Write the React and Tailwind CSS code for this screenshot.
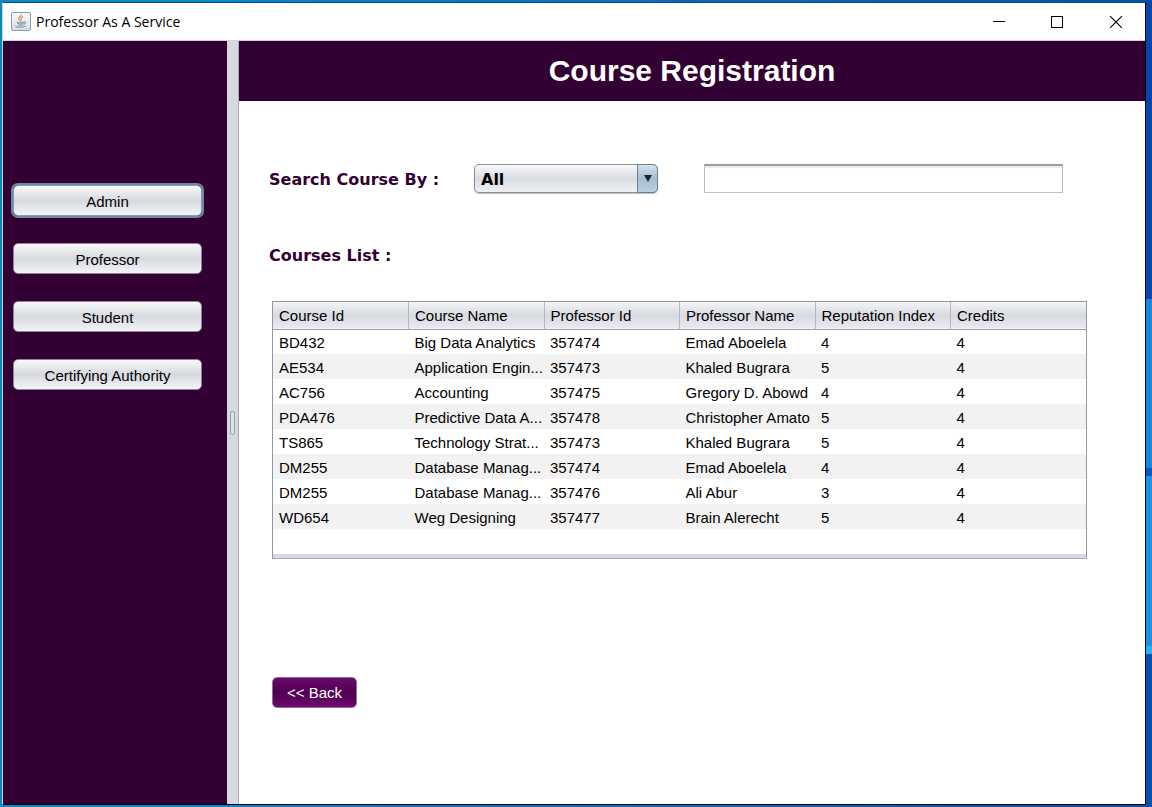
const COLUMNS = ["Course Id", "Course Name", "Professor Id", "Professor Name", "Reputation Index", "Credits"];

const COURSES = [
  ["BD432", "Big Data Analytics", "357474", "Emad Aboelela", "4", "4"],
  ["AE534", "Application Engin...", "357473", "Khaled Bugrara", "5", "4"],
  ["AC756", "Accounting", "357475", "Gregory D. Abowd", "4", "4"],
  ["PDA476", "Predictive Data A...", "357478", "Christopher Amato", "5", "4"],
  ["TS865", "Technology Strat...", "357473", "Khaled Bugrara", "5", "4"],
  ["DM255", "Database Manag...", "357474", "Emad Aboelela", "4", "4"],
  ["DM255", "Database Manag...", "357476", "Ali Abur", "3", "4"],
  ["WD654", "Weg Designing", "357477", "Brain Alerecht", "5", "4"],
];

const ROLES = ["Admin", "Professor", "Student", "Certifying Authority"];

function JavaIcon() {
  return (
    <svg className="size-5 shrink-0" viewBox="0 0 20 20" fill="none" aria-hidden="true">
      <defs>
        <linearGradient id="tile" x1="0" y1="0" x2="0" y2="1">
          <stop offset="0" stopColor="#fdfdfe" />
          <stop offset="1" stopColor="#d3dbe2" />
        </linearGradient>
      </defs>
      <rect x="0.5" y="0.5" width="19" height="18" rx="1.5" fill="url(#tile)" stroke="#8b9dac" />
      <path d="M10.300 2.500c.8 1.800-3 2.600-2.700 4.200.1 1 1.300 1.300 1.700 2.200M11.800 4.800c-1.500.6-2.400 1.300-1.800 2.200.3.600.7 1 0 1.700" stroke="#e58a35" strokeWidth="1.100" strokeLinecap="round" />
      <path d="M6 10c-1.200.8 5.300 1 7 0M6.700 11.500c1.200.8 4.300.7 5.500 0M7.300 13c1.200.6 3.300.6 4.500 0M13.300 10c2.300-.5 2.100 1.600-.3 2.200M5 14c-3 1.400 7 2 9.800 0" stroke="#5f89a6" strokeWidth="0.900" strokeLinecap="round" />
    </svg>
  );
}

function TitleBar() {
  return (
    <header className="flex h-[38px] items-center justify-between border-b border-[#d9cfd9] bg-white pl-2">
      <div className="flex items-center gap-[5px]">
        <JavaIcon />
        <span className="font-['Open_Sans','Noto_Sans',sans-serif] text-[14px] leading-5 text-black">Professor As A Service</span>
      </div>
      <div className="flex">
        <button type="button" aria-label="Minimize" className="flex h-9 w-[58px] items-center justify-center">
          <svg width="12" height="12" viewBox="0 0 12 12" shapeRendering="crispEdges"><path d="M0 5.500h12" stroke="#000" /></svg>
        </button>
        <button type="button" aria-label="Maximize" className="flex h-9 w-[58px] items-center justify-center">
          <svg width="12" height="12" viewBox="0 0 12 12" shapeRendering="crispEdges"><path d="M.5.5h11v11H.5z" fill="none" stroke="#000" /></svg>
        </button>
        <button type="button" aria-label="Close" className="flex h-9 w-[59px] items-center justify-center">
          <svg width="12" height="12" viewBox="0 0 12 12"><path d="M0 0l12 12M12 0L0 12" stroke="#000" strokeWidth="1.100" /></svg>
        </button>
      </div>
    </header>
  );
}

function Sidebar() {
  return (
    <nav className="flex w-[224px] shrink-0 flex-col gap-[27px] bg-[#330033] pt-[144px] pr-[25px] pl-[10px]">
      {ROLES.map((role) => (
        <button
          key={role}
          type="button"
          className="h-[31px] rounded-[5px] border border-[#8d8593] bg-linear-to-b from-[#f8f9fa] via-[#d6d9df] to-[#f2f4f8] pt-[2px] text-[15px] leading-5 text-black first:border-[#7f9db9] first:ring-2 first:ring-[#73899f]"
        >
          {role}
        </button>
      ))}
    </nav>
  );
}

function Divider() {
  return (
    <div className="flex w-3 shrink-0 items-center justify-center border-r border-[#a9acb5] bg-[#d6d9df]">
      <div className="h-6 w-[5px] rounded-[2px] border border-[#9a9da6] bg-[#dfe2e7]" />
    </div>
  );
}

function SearchForm() {
  return (
    <form className="flex items-center pr-[82px] pl-[30px]">
      <label htmlFor="search-by" className="w-[205px] shrink-0 pt-[2px] font-['DejaVu_Sans',sans-serif] text-[16px] leading-5 font-bold text-[#330033]">
        Search Course By :
      </label>
      <div className="relative w-[184px] shrink-0">
        <select
          id="search-by"
          className="block h-[29px] w-full appearance-none rounded-[5px] border border-[#8b8f99] bg-linear-to-b from-[#f8f9fb] via-[#d9dce2] to-[#eff1f5] pt-[2px] pl-[6px] font-['DejaVu_Sans',sans-serif] text-[16px] leading-5 font-bold text-black shadow-[0_1px_1px_#b9bcc4]"
        >
          <option>All</option>
        </select>
        <span className="pointer-events-none absolute inset-y-0 right-0 flex w-[21px] items-center justify-center rounded-r-[5px] border border-[#6d8194] bg-linear-to-b from-[#d5e2ec] via-[#a4bdd0] to-[#b9d0e1]">
          <svg width="8" height="7" viewBox="0 0 8 7"><path d="M0 0h8L4 7z" fill="#22262b" /></svg>
        </span>
      </div>
      <input
        type="text"
        aria-label="Search text"
        className="ml-[46px] h-[29px] min-w-0 flex-1 border border-t-2 border-[#c0c0c0] border-t-[#9c9c9c] bg-white px-2 text-[15px] shadow-[inset_0_2px_1px_#ececec] outline-none"
      />
    </form>
  );
}

function CoursesTable() {
  return (
    <div className="mr-[58px] ml-[33px] flex h-[258px] flex-col border border-[#9297a1] border-b-[#a9adb8] bg-white">
      <div className="flex-1">
        <table className="w-full table-fixed border-collapse text-[15px] leading-5 whitespace-nowrap text-black">
          <thead>
            <tr className="h-[27px] border-b border-[#9a9da9] bg-linear-to-b from-[#f4f5f7] via-[#d7dae0] to-[#e8eaf0]">
              {COLUMNS.map((name) => (
                <th key={name} scope="col" className="border-r border-[#b4b7c0] pt-[2px] pb-0 pl-[6px] text-left font-normal last:border-r-0">
                  {name}
                </th>
              ))}
            </tr>
          </thead>
          <tbody>
            {COURSES.map((course, row) => (
              <tr key={row} className="h-[25px] even:bg-[#f2f2f2]">
                {course.map((value, column) => (
                  <td key={column} className="pt-[2px] pb-0 pl-[6px]">{value}</td>
                ))}
              </tr>
            ))}
          </tbody>
        </table>
      </div>
      <div className="h-1 bg-[#d6d9df]" />
    </div>
  );
}

export default function App() {
  return (
    <div className="flex min-h-screen flex-col pt-[2px] pr-[6px] pb-[2px] pl-[2px] font-['Liberation_Sans',Arial,sans-serif] [background:linear-gradient(to_bottom,#0846a8_0_37%,#1c86dc_37%_58%,#0858c4_58%_59%,#2190e0_59%_80%,#30b0ec_80%_81%,#0850ac_81%)_right/6px_100%_no-repeat,linear-gradient(to_right,#0b88c0,#0b84d0_20%,#0750ac)]">
      <div className="flex flex-1 flex-col border-t border-t-[#0e4a78] border-r border-r-black border-b border-b-black border-l border-l-[#c9dbe8]">
        <TitleBar />
        <div className="flex flex-1">
          <Sidebar />
          <Divider />
          <main className="min-w-0 flex-1 bg-white">
            <h1 className="flex h-[60px] items-center justify-center bg-[#330033] text-[30px] leading-9 font-bold text-white">Course Registration</h1>
            <div className="flex flex-col pt-[63px]">
              <SearchForm />
              <h2 className="mt-[53px] pl-[30px] font-['DejaVu_Sans',sans-serif] text-[16px] leading-5 font-bold text-[#330033]">Courses List :</h2>
              <div className="mt-[35px]">
                <CoursesTable />
              </div>
              <button
                type="button"
                className="mt-[118px] ml-[33px] h-[31px] w-[85px] rounded-[5px] border border-[#8a7390] bg-linear-to-b from-[#6b0a6d] via-[#500052] to-[#6c0c6e] text-[15px] leading-5 text-white"
              >
                &lt;&lt; Back
              </button>
            </div>
          </main>
        </div>
      </div>
    </div>
  );
}
